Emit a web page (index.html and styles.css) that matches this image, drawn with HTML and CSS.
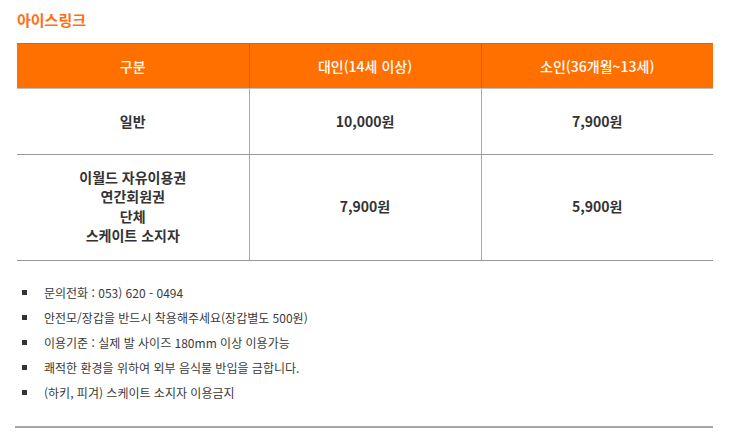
FILE: index.html
```html
<!DOCTYPE html>
<html lang="ko">
<head>
<meta charset="utf-8">
<link rel="stylesheet" href="styles.css">
</head>
<body>
<div class="wrap">
  <h2 class="title">아이스링크</h2>
  <table class="price">
    <thead>
      <tr>
        <th>구분</th>
        <th>대인(14세 이상)</th>
        <th>소인(36개월~13세)</th>
      </tr>
    </thead>
    <tbody>
      <tr class="r1">
        <td>일반</td>
        <td>10,000원</td>
        <td>7,900원</td>
      </tr>
      <tr class="r2">
        <td>이월드 자유이용권<br>연간회원권<br>단체<br>스케이트 소지자</td>
        <td>7,900원</td>
        <td>5,900원</td>
      </tr>
    </tbody>
  </table>
  <ul class="notes">
    <li>문의전화 : 053) 620 - 0494</li>
    <li>안전모/장갑을 반드시 착용해주세요(장갑별도 500원)</li>
    <li>이용기준 : 실제 발 사이즈 180mm 이상 이용가능</li>
    <li>쾌적한 환경을 위하여 외부 음식물 반입을 금합니다.</li>
    <li>(하키, 피겨) 스케이트 소지자 이용금지</li>
  </ul>
  <div class="endline"></div>
</div>
</body>
</html>
```
FILE: styles.css
```css
html, body {
  margin: 0;
  padding: 0;
  background: #fff;
}
body {
  font-family: "Noto Sans CJK KR", "Noto Sans", sans-serif;
  color: #333;
}
.wrap {
  padding: 9px 0 0 17px;
  width: 696px;
}
.title {
  margin: 0;
  font-size: 15px;
  line-height: 22px;
  font-weight: 700;
  color: #ff6f0f;
}
.price {
  margin-top: 12px;
  width: 696px;
  border-collapse: collapse;
  table-layout: fixed;
}
.price th {
  background: #ff7000;
  color: #fff;
  font-size: 14px;
  font-weight: 500;
  height: 44px;
  padding: 0;
  border-top: 1px solid #8c7b6b;
  border-bottom: 1px solid #bdbdbd;
  border-left: 1px solid #d45f00;
}
.price th:first-child { border-left: none; }
.price td {
  text-align: center;
  font-size: 14px;
  font-weight: 700;
  color: #333;
  padding: 0 0 2px 0;
  border-bottom: 1px solid #999;
  border-left: 1px solid #aaa;
}
.price td:first-child { border-left: none; }
.r1 td { height: 63px; }
.r2 td { height: 103px; line-height: 19.5px; }
.notes {
  list-style: none;
  margin: 19px 0 0 0;
  padding: 0;
}
.notes li {
  position: relative;
  padding-left: 27px;
  font-size: 12px;
  line-height: 25px;
  color: #3a3a3a;
}
.notes li::before {
  content: "";
  position: absolute;
  left: 5px;
  top: 10px;
  width: 5px;
  height: 5px;
  background: #333;
}
.endline {
  margin: 21px 0 0 -2px;
  width: 698px;
  height: 2px;
  background: #a6a6a6;
}
```
